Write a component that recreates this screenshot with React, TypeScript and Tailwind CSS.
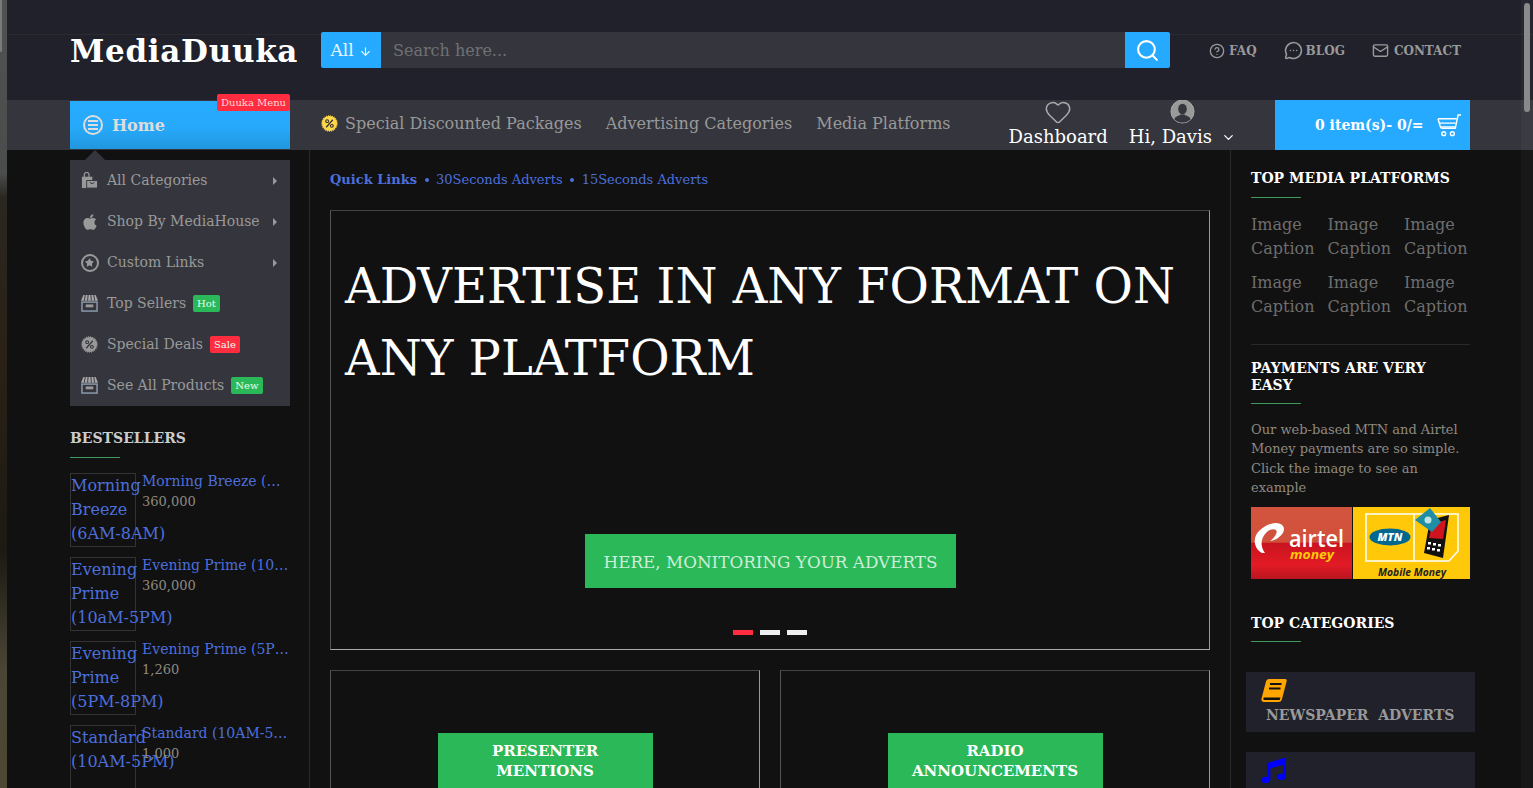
import React from 'react';
import { Search, CircleHelp, MessageCircleMore, Mail, Heart, ChevronDown, ArrowDown } from 'lucide-react';
import { FaApple, FaMusic, FaStar } from 'react-icons/fa';

const StoreIcon = () => (
  <svg viewBox="0 0 18 18" className="w-[17px] h-[17px] shrink-0">
    <path d="M2.500 0h13L18 6H0z" fill="#a8a8a8" />
    <path d="M4.500 0 3.500 6M7.500 0 7 6M10.500 0l.5 6M13.500 0l1 6" stroke="#35363d" strokeWidth="1" />
    <rect x="1" y="7.500" width="16" height="9.500" fill="none" stroke="#8f9db0" strokeWidth="1.500" />
    <rect x="5" y="10" width="8" height="3" fill="#999" />
  </svg>
);

const BagIcon = () => (
  <svg viewBox="0 0 18 18" className="w-[17px] h-[17px] shrink-0">
    <path d="M1 5h11v12H1z" fill="#999" />
    <path d="M3.500 6V3a2.500 2.500 0 0 1 5 0v3" fill="none" stroke="#999" strokeWidth="1.300" />
    <path d="M6 9h11.500v8H6z" fill="#999" stroke="#35363d" strokeWidth="1" />
    <path d="M9.500 10.500a2.300 2.300 0 0 0 4.500 0" fill="none" stroke="#35363d" strokeWidth="1" />
  </svg>
);

const DiscountIcon = ({ fill, ink }: { fill: string; ink: string }) => (
  <svg viewBox="0 0 18 18" className="w-[17px] h-[17px] shrink-0">
    <circle cx="9" cy="9" r="8" fill={fill} stroke={fill} strokeWidth="1.500" strokeDasharray="1 1" />
    <circle cx="6.500" cy="6.500" r="1.500" fill="none" stroke={ink} strokeWidth="1.200" />
    <circle cx="11.500" cy="11.500" r="1.500" fill="none" stroke={ink} strokeWidth="1.200" />
    <path d="M12.500 5 5.500 13" stroke={ink} strokeWidth="1.300" />
  </svg>
);

const UserIcon = () => (
  <svg viewBox="0 0 26 26" className="w-[25px] h-[25px]">
    <circle cx="13" cy="13" r="12" fill="#999" stroke="#aaa" strokeWidth="1" />
    <ellipse cx="13" cy="10.500" rx="4.500" ry="5.500" fill="#35363d" />
    <path d="M4.500 21c1-3.500 5-3.500 6.500-5h4c1.500 1.500 5.500 1.500 6.500 5a12 12 0 0 1-17 0z" fill="#35363d" />
  </svg>
);

const CartIcon = () => (
  <svg viewBox="0 0 26 24" className="w-[25px] h-[23px]" fill="none" stroke="#fff" strokeWidth="1.500">
    <path d="M25 1h-3l-3 14H4.500" />
    <path d="M1 5h19.500M2 9.500h17.500M3.500 13.500h15.500" />
    <path d="M1 5l3 10" />
    <circle cx="7" cy="20.500" r="2" />
    <circle cx="16" cy="20.500" r="2" />
  </svg>
);

const BookIcon = () => (
  <svg viewBox="0 0 26 25" className="block w-[26px] h-[25px]">
    <path d="M8 1h16c1.500 0 2 1 1.600 2.500L21 21c-.5 2-1.500 3-3.500 3H3c-2 0-3-1.500-2.500-3.500L5 3.500C5.500 2 6.500 1 8 1z" fill="#ffa500" />
    <path d="M3 19.500h16.500l-.8 2.500H3.200c-1 0-1-2.500-.2-2.500z" fill="#111" />
    <path d="M9 6h11.500M8 10.500h11.500" stroke="#111" strokeWidth="2" />
  </svg>
);

const PaymentBanner = () => (
  <svg viewBox="0 0 219 72" className="block w-[219px] h-[72px]">
    <defs>
      <linearGradient id="airtelBg" x1="0" y1="0" x2="0" y2="1">
        <stop offset="0" stopColor="#d4553f" />
        <stop offset="0.49" stopColor="#d0503a" />
        <stop offset="0.5" stopColor="#c8141f" />
        <stop offset="0.8" stopColor="#e31b25" />
        <stop offset="1" stopColor="#b81520" />
      </linearGradient>
    </defs>
    <rect width="101" height="72" fill="url(#airtelBg)" />
    <rect x="102" width="117" height="72" fill="#ffc90a" />
    <path d="M11 46C3 42 1 31 8 24c7-7 19-11 24-5 4 6-5 14-13 15 5-4 8-9 6-11-5-3-12 3-14 10-1 5 0 9 3 13z" fill="#fff" />
    <text x="38" y="40" fontSize="24" fontWeight="600" fill="#fff" fontFamily="'Open Sans', sans-serif" textLength="55" lengthAdjust="spacingAndGlyphs">airtel</text>
    <text x="39" y="52" fontSize="13" fontWeight="700" fontStyle="italic" fill="#ffc90a" fontFamily="'Open Sans', sans-serif" textLength="44" lengthAdjust="spacingAndGlyphs">money</text>
    <path d="M115 7h92v37l-9 10h-83z" fill="none" stroke="#fff" strokeWidth="1.500" />
    <path d="M163 7v47" stroke="#fff" strokeWidth="1.500" />
    <ellipse cx="139" cy="30" rx="20.500" ry="8.500" fill="#00678f" />
    <text x="139" y="34" textAnchor="middle" fontSize="11" fontWeight="800" fontStyle="italic" fill="#fff" fontFamily="'Open Sans', sans-serif">MTN</text>
    <path d="M179 13 198 8l-6 43-19-5z" fill="#111" />
    <path d="M181 17l14-4-3 19-14-1z" fill="#d0141f" />
    <path d="M164 13 179 1l11 14-9 10z" fill="#1f8ea5" />
    <circle cx="177" cy="13" r="3.500" fill="#bfe3e6" />
    <g fill="#fff">
      <rect x="177" y="35" width="3" height="2.500" /><rect x="182" y="36" width="3" height="2.500" /><rect x="187" y="37" width="3" height="2.500" />
      <rect x="176" y="40" width="3" height="2.500" /><rect x="181" y="41" width="3" height="2.500" /><rect x="186" y="42" width="3" height="2.500" />
    </g>
    <text x="161" y="69" textAnchor="middle" fontSize="10.500" fontWeight="700" fontStyle="italic" fill="#222" fontFamily="'Open Sans', sans-serif" textLength="68" lengthAdjust="spacingAndGlyphs">Mobile Money</text>
  </svg>
);

const menuItems = [
  { label: 'All Categories', icon: <BagIcon />, arrow: true },
  { label: 'Shop By MediaHouse', icon: <FaApple className="w-[18px] h-[18px] shrink-0 text-[#999]" />, arrow: true },
  {
    label: 'Custom Links',
    icon: (
      <span className="w-[18px] h-[18px] shrink-0 rounded-full border-2 border-[#999] flex items-center justify-center">
        <FaStar className="w-[9px] h-[9px] text-[#999]" />
      </span>
    ),
    arrow: true,
  },
  { label: 'Top Sellers', icon: <StoreIcon />, tag: 'Hot', tagBg: 'bg-[#2ab859]' },
  { label: 'Special Deals', icon: <DiscountIcon fill="#999" ink="#35363d" />, tag: 'Sale', tagBg: 'bg-[#ff2d3f]' },
  { label: 'See All Products', icon: <StoreIcon />, tag: 'New', tagBg: 'bg-[#2ab859]' },
];

const bestsellers = [
  { name: 'Morning Breeze', slot: '(6AM-8AM)', price: '360,000' },
  { name: 'Evening Prime', slot: '(10aM-5PM)', price: '360,000' },
  { name: 'Evening Prime', slot: '(5PM-8PM)', price: '1,260' },
  { name: 'Standard', slot: '(10AM-5PM)', price: '1,000' },
];

const Heading = ({ children, tight }: { children: React.ReactNode; tight?: boolean }) => (
  <div>
    <h3 className="text-[14px] leading-[17px] font-bold uppercase text-white">{children}</h3>
    <div className={`w-[50px] h-px bg-[#3f9a5c] ${tight ? 'mt-[9px]' : 'mt-[10px]'}`} />
  </div>
);

const App: React.FC = () => {
  return (
    <div className="relative flex w-[1533px] h-[788px] overflow-hidden bg-[#111] font-['DejaVu_Serif',serif]">
      <div className="relative w-[7px] shrink-0 bg-[linear-gradient(180deg,#4f5152_0%,#4b4d4d_22%,#2a2720_25%,#2b2116_45%,#1c1a12_70%,#4a4536_85%,#4d4733_100%)]">
        <div className="absolute left-0 top-0 w-[2px] h-[52px] rounded-b-[2px] bg-[#7a7a7a]" />
      </div>

      <div className="flex-1 min-w-0 flex flex-col">
        {/* top header */}
        <header className="relative h-[100px] shrink-0 bg-[#20212b] flex items-center pl-[63px]">
          <div className="absolute left-0 right-0 top-[34px] h-px bg-[#2a2b2f]" />
          <a className="relative w-[251px] pt-[2px] text-[31px] font-bold text-white tracking-[0.7px]">MediaDuuka</a>
          <div className="relative flex w-[849px] h-[36px]">
            <button className="w-[60px] pt-[2px] bg-[#26aaff] rounded-l-[2px] flex items-center justify-center gap-[5px] text-[17px] text-white/90">
              All <ArrowDown className="w-[13px] h-[13px]" />
            </button>
            <div className="flex-1 pt-[2px] bg-[#35363d] flex items-center pl-[12px] text-[16px] text-[#6f7074]">Search here...</div>
            <button className="w-[45px] bg-[#26aaff] rounded-r-[2px] flex items-center justify-center">
              <Search className="w-[25px] h-[25px] text-white" strokeWidth={2} />
            </button>
          </div>
          <nav className="relative flex items-center ml-[39px] pt-[1px] text-[12px] font-bold text-[#999]">
            <a className="flex items-center gap-[4px]"><CircleHelp className="w-[16px] h-[16px]" />FAQ</a>
            <a className="flex items-center gap-[3px] ml-[27px]"><MessageCircleMore className="w-[19px] h-[19px]" />BLOG</a>
            <a className="flex items-center gap-[5px] ml-[27px]"><Mail className="w-[17px] h-[17px]" />CONTACT</a>
          </nav>
        </header>

        {/* main nav */}
        <div className="h-[50px] shrink-0 bg-[#35363d] flex items-stretch pl-[63px]">
          <div className="relative w-[220px] my-px flex items-center pl-[13px] bg-[linear-gradient(180deg,#27acff_0%,#27a9fb_55%,#2197de_100%)] text-[#ddd]">
            <span className="w-[20px] h-[20px] rounded-full border-2 border-[#ddd] flex flex-col items-center justify-center gap-[2px]">
              <span className="w-[10px] h-[2px] bg-[#ddd]" />
              <span className="w-[10px] h-[2px] bg-[#ddd]" />
              <span className="w-[10px] h-[2px] bg-[#ddd]" />
            </span>
            <span className="ml-[9px] pt-[1px] text-[16px] font-bold">Home</span>
            <span className="absolute right-0 top-[-7px] h-[17px] w-[73px] rounded-[2px] bg-[#ff2d3f] flex items-center justify-center text-[10px] text-[#ffd7da]">Duuka Menu</span>
          </div>
          <div className="flex items-center ml-[31px] pb-[3px] gap-[24px] text-[16px] text-[#999]">
            <a className="flex items-center gap-[7px]"><DiscountIcon fill="#ffd84a" ink="#333" />Special Discounted Packages</a>
            <a>Advertising Categories</a>
            <a>Media Platforms</a>
          </div>
          <div className="flex ml-[58px] gap-[21px] text-[18px] leading-[26px] text-white">
            <div className="flex flex-col items-center -mt-px">
              <div className="h-[25px] flex items-center justify-center"><Heart className="w-[30px] h-[28px] text-[#aaa]" strokeWidth={1.300} /></div>
              <span>Dashboard</span>
            </div>
            <div className="flex flex-col -mt-px">
              <div className="h-[25px] w-full flex items-center justify-center"><UserIcon /></div>
              <span className="flex items-center">Hi, Davis <ChevronDown className="ml-[9px] w-[15px] h-[15px]" /></span>
            </div>
          </div>
          <div className="ml-[39px] w-[195px] bg-[#26aaff] flex items-center pl-[40px] gap-[13px] text-[14px] font-bold text-white">
            <span>0 item(s)- 0/=</span>
            <CartIcon />
          </div>
        </div>

        {/* body */}
        <div className="flex flex-1 min-h-0">
          <aside className="w-[303px] shrink-0 pl-[63px] pr-[19px] border-r border-[#2a2a2a]">
            <div className="relative mt-[10px] w-[220px] bg-[#35363d]">
              <span className="absolute left-[15px] top-[-10px] w-0 h-0 border-x-[10px] border-x-transparent border-b-[10px] border-b-[#35363d]" />
              {menuItems.map((item) => (
                <div key={item.label} className="h-[41px] flex items-center pl-[11px] text-[14px] text-[#999]">
                  <span className="w-[17px] flex justify-center">{item.icon}</span>
                  <span className="ml-[9px]">{item.label}</span>
                  {item.tag && (
                    <span className={`ml-[7px] h-[17px] px-[4px] rounded-[2px] flex items-center text-[10px] text-[#e8fff0] ${item.tagBg}`}>{item.tag}</span>
                  )}
                  {item.arrow && (
                    <span className="ml-auto mr-[13px] w-0 h-0 border-y-[4px] border-y-transparent border-l-[4px] border-l-[#999]" />
                  )}
                </div>
              ))}
            </div>

            <h3 className="mt-[24px] text-[14px] leading-[17px] font-bold uppercase text-[#ccc]">Bestsellers</h3>
            <div className="w-[50px] h-px bg-[#3f9a5c] mt-[10px]" />
            <div className="mt-[15px] flex flex-col gap-[10px]">
              {bestsellers.map((b) => (
                <div key={b.name + b.slot} className="flex h-[74px] shrink-0">
                  <div className="w-[66px] h-[74px] shrink-0 border border-[#333] text-[16px] leading-[24px] text-[#4c6fdc]">
                    {b.name} <span className="whitespace-nowrap">{b.slot}</span>
                  </div>
                  <div className="ml-[6px] min-w-0 w-[147px]">
                    <div className="truncate text-[14px] leading-[16px] text-[#4c6fdc]">{b.name} {b.slot}</div>
                    <div className="mt-[3px] text-[13px] leading-[20px] text-[#8f8a80]">{b.price}</div>
                  </div>
                </div>
              ))}
            </div>
          </aside>

          <main className="w-[920px] shrink-0 px-[20px]">
            <div className="mt-[22px] flex items-center h-[16px] text-[13px] text-[#4c6fdc]">
              <b>Quick Links</b>
              <span className="mx-[7.500px] w-[4px] h-[4px] rounded-full bg-[#4c6fdc]" />
              <span>30Seconds Adverts</span>
              <span className="mx-[7.500px] w-[4px] h-[4px] rounded-full bg-[#4c6fdc]" />
              <span>15Seconds Adverts</span>
            </div>

            <section className="mt-[22px] relative h-[440px] border border-t-[#444] border-l-[#555] border-r-[#999] border-b-[#aaa] pl-[14px] pt-[39px]">
              <h1 className="text-[48px] leading-[72px] text-white uppercase">Advertise in any format on<br />any platform</h1>
              <div className="absolute left-[254px] top-[323px] w-[371px] h-[54px] pt-[3px] bg-[#2ab859] flex items-center justify-center text-[16.800px] text-[#cdeed8]">HERE, MONITORING YOUR ADVERTS</div>
              <div className="absolute left-[402px] top-[419px] flex gap-[7px]">
                <span className="w-[20px] h-[5px] bg-[#ff2d3f]" />
                <span className="w-[20px] h-[5px] bg-[#eee]" />
                <span className="w-[20px] h-[5px] bg-[#eee]" />
              </div>
            </section>

            <div className="mt-[20px] grid grid-cols-2 gap-[20px]">
              {['PRESENTER MENTIONS', 'RADIO ANNOUNCEMENTS'].map((t) => (
                <div key={t} className="h-[200px] flex justify-center border border-t-[#444] border-l-[#555] border-r-[#999] border-b-[#aaa] pt-[62px]">
                  <div className="w-[215px] h-[100px] bg-[#2ab859] px-[16px] pt-[8px] text-center text-[15px] leading-[20px] font-bold text-white">{t}</div>
                </div>
              ))}
            </div>
          </main>

          <aside className="flex-1 min-w-0 border-l border-[#2a2a2a] pl-[20px]">
            <div className="w-[219px] pt-[20px]">
              <Heading>Top Media Platforms</Heading>
              <div className="mt-[15px] w-[229.500px] grid grid-cols-3 gap-y-[10px] text-[16px] leading-[24px] text-[#6e6e6e]">
                {Array.from({ length: 6 }).map((_, i) => (
                  <div key={i} className="h-[48px]">Image Caption</div>
                ))}
              </div>
              <div className="mt-[25px] h-px bg-[#2a2a2a]" />
              <div className="mt-[15px]"><Heading tight>Payments are very easy</Heading></div>
              <p className="mt-[15.500px] text-[13px] leading-[19.500px] text-[#8f8a80]">Our web-based MTN and Airtel Money payments are so simple. Click the image to see an example</p>
              <div className="mt-[9.500px]"><PaymentBanner /></div>
              <div className="mt-[36px]"><Heading tight>Top Categories</Heading></div>
            </div>
            <div className="mt-[30px] ml-[-5px] w-[229px] flex flex-col gap-[20px]">
              <div className="h-[60px] shrink-0 bg-[#20212b] pl-[15px] pt-[6px]">
                <BookIcon />
                <div className="mt-[2px] pl-[5px] text-[14px] leading-[20px] font-bold text-[#999] whitespace-pre">NEWSPAPER  ADVERTS</div>
              </div>
              <div className="h-[60px] shrink-0 bg-[#20212b] pl-[15px] pt-[6px]">
                <FaMusic className="w-[25px] h-[25px] text-[#0000ff]" />
              </div>
            </div>
          </aside>
        </div>
      </div>

      {/* page scrollbar */}
      <div className="absolute right-0 top-0 w-[12px] h-full bg-white/[0.03] pl-[3px] pt-[3px]">
        <div className="w-[6px] h-[109px] rounded-[3px] bg-[#8a8a8a]" />
      </div>
    </div>
  );
};

export default App;
